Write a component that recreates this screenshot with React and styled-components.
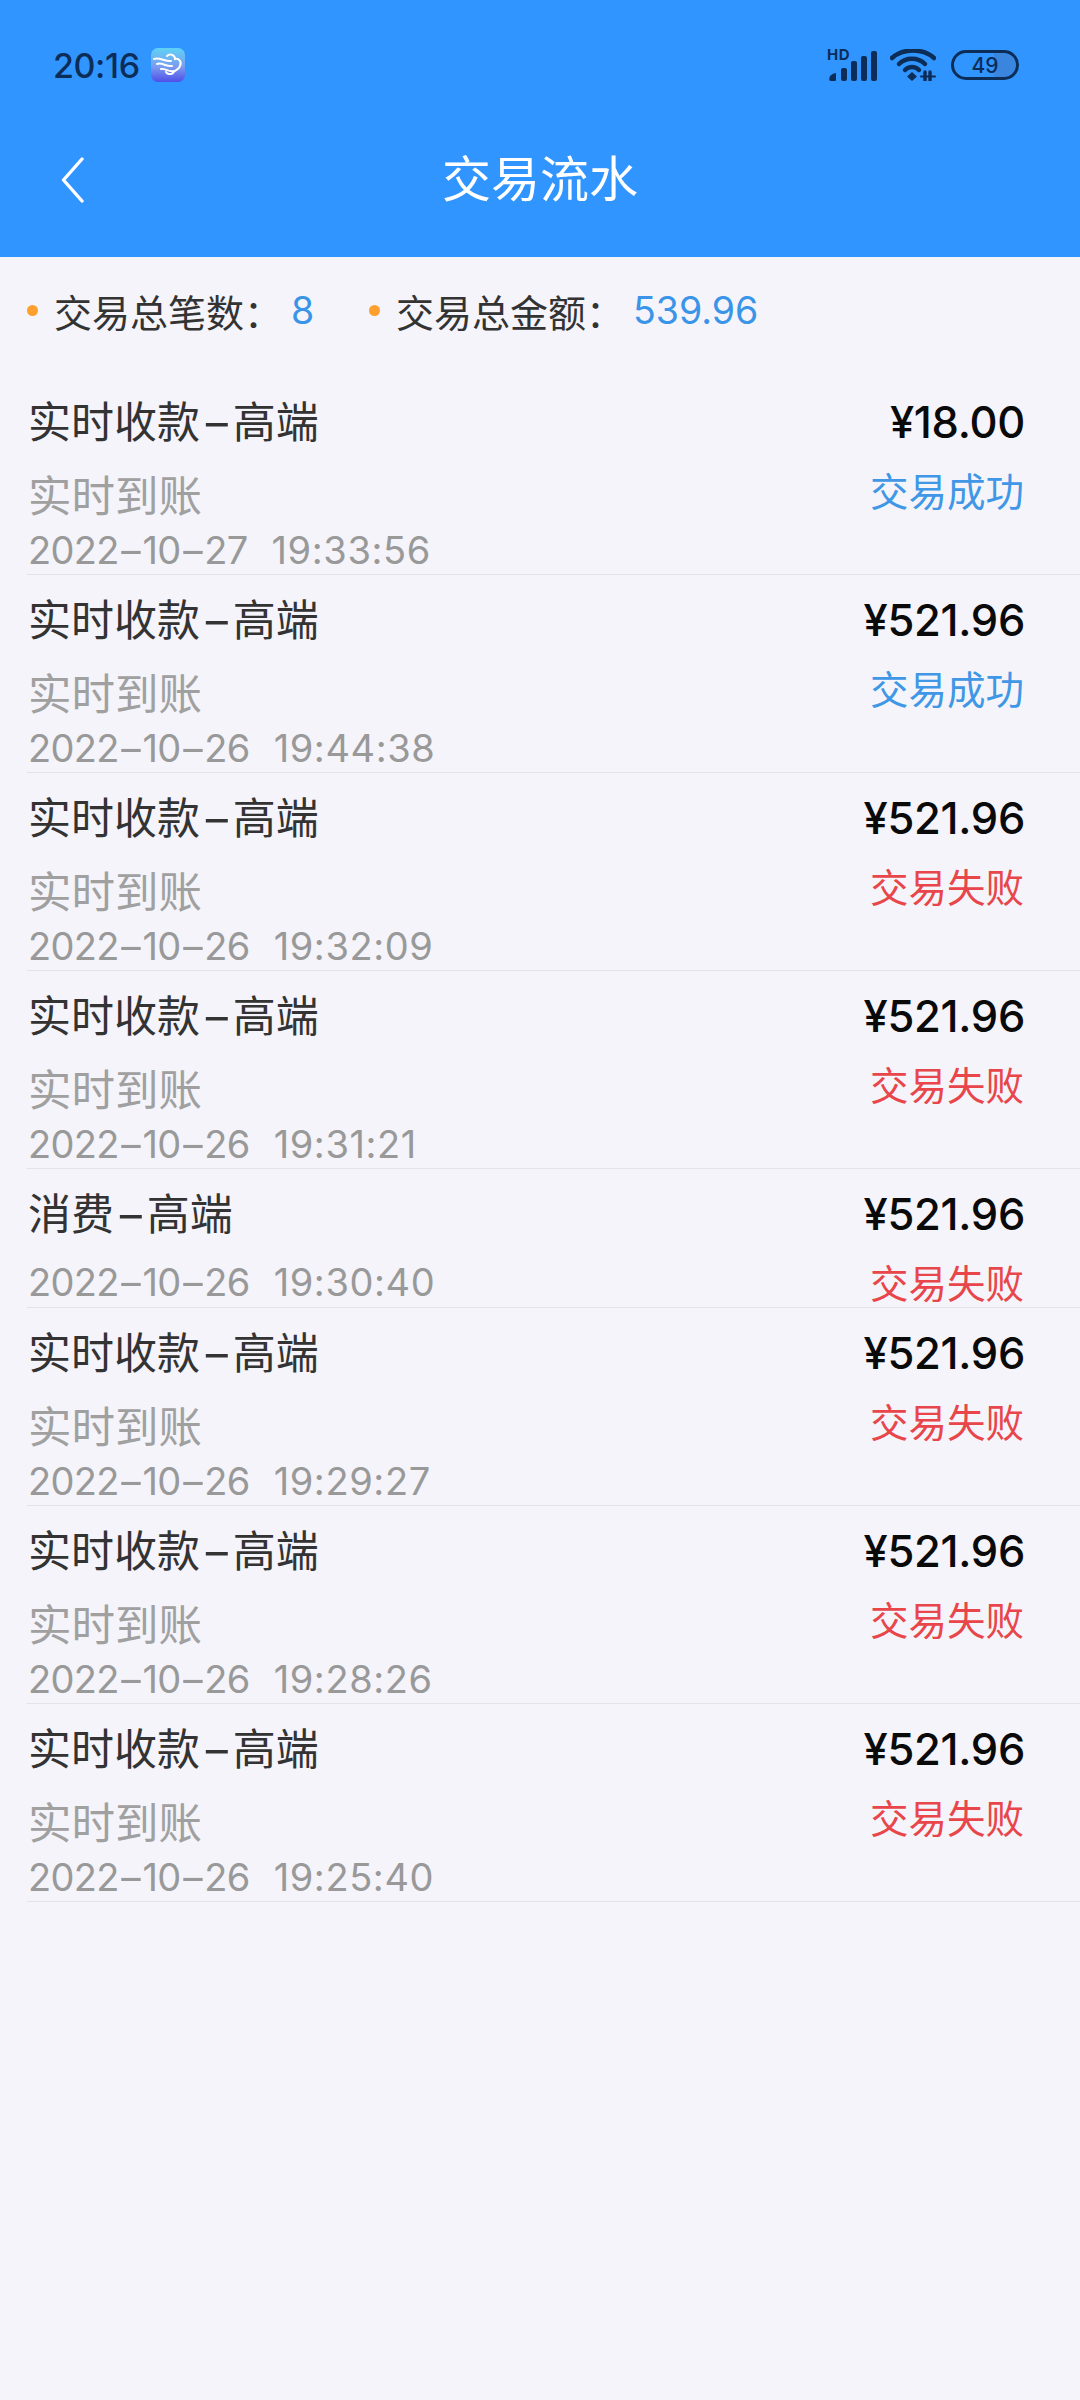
import React from 'react';
import styled, {createGlobalStyle} from 'styled-components';

const GlobalStyle = createGlobalStyle`
  html, body {
    margin: 0;
    padding: 0;
    background-color: #f4f4fa;
  }
  * {
    box-sizing: border-box;
  }
`;

const FONT = `Inter, "Noto Sans CJK SC", sans-serif`;

const Page = styled.div`
  width: 1080px;
  min-height: 2400px;
  background-color: #f4f4fa;
  font-family: ${FONT};
`;

const Header = styled.header`
  height: 257px;
  background-color: #3195ff;
  display: flex;
  flex-direction: column;
`;

const StatusBar = styled.div`
  height: 130px;
  padding: 0 61px 0 53px;
  display: flex;
  align-items: center;
  justify-content: space-between;
`;

const StatusLeft = styled.div`
  display: flex;
  align-items: center;
  gap: 11px;
`;

const Clock = styled.span`
  font-size: 34px;
  font-weight: 500;
  letter-spacing: -0.4px;
  color: #0c2d57;
`;

const StatusRight = styled.div`
  display: flex;
  align-items: center;
  gap: 13px;
`;

const SignalWrap = styled.div`
  position: relative;
  width: 50px;
  height: 32px;
`;

const HdLabel = styled.span`
  position: absolute;
  left: 0;
  top: -3px;
  font-size: 15px;
  line-height: 18px;
  font-weight: 700;
  letter-spacing: 0.6px;
  color: #0c2d57;
`;

const Battery = styled.div`
  width: 68px;
  height: 30px;
  margin-left: 2px;
  border: 3.5px solid #0c2d57;
  border-radius: 15px;
  overflow: hidden;
  display: flex;
  align-items: center;
  justify-content: center;
  font-size: 21px;
  font-weight: 500;
  color: #0c2d57;
  background: linear-gradient(90deg, transparent 65%, #3a85de 65%);
`;

const NavBar = styled.nav`
  height: 100px;
  padding: 0 0 0 61px;
  display: flex;
  align-items: center;
  position: relative;
`;

const NavTitle = styled.h1`
  margin: 0;
  position: absolute;
  left: 0;
  right: 0;
  text-align: center;
  font-size: 49px;
  font-weight: 400;
  line-height: 100px;
  color: #ffffff;
`;

const Summary = styled.div`
  height: 120px;
  padding: 0 0 13px 27px;
  display: flex;
  align-items: center;
`;

const SummaryItem = styled.div`
  display: flex;
  align-items: center;
  width: ${props => props.$width}px;
`;

const Dot = styled.i`
  width: 11px;
  height: 11px;
  border-radius: 50%;
  background-color: #ff9f2e;
  margin-right: 16px;
`;

const SummaryLabel = styled.span`
  font-size: 38px;
  color: #333333;
`;

const SummaryValue = styled.span`
  font-size: 37.5px;
  color: #3a94e8;
  margin-left: 9px;
`;

const Row = styled.div`
  margin-left: 27px;
  padding: 0 55px 0 1px;
  display: flex;
  justify-content: space-between;
  border-bottom: 1px solid #e3e3ea;
`;

const Column = styled.div`
  display: flex;
  flex-direction: column;
  align-items: ${props => (props.$right ? 'flex-end' : 'flex-start')};
`;

const Title = styled.div`
  height: 88px;
  line-height: 90px;
  font-size: 43px;
  color: #333333;
  white-space: nowrap;
`;

const Channel = styled.div`
  height: 60px;
  line-height: 62px;
  font-size: 43.5px;
  color: #a0a0a0;
`;

const Time = styled.div`
  height: 49px;
  line-height: 51px;
  font-size: 38px;
  letter-spacing: -0.7px;
  color: #999999;
  white-space: pre;
`;

const TimeOfDay = styled.span`
  margin-left: 4px;
  letter-spacing: 0.6px;
`;

const Dash = styled.span`
  display: inline-block;
  margin: 0 ${props => props.$gap}px;
  transform: scaleX(1.6);
`;

const Amount = styled.div`
  height: 88px;
  line-height: 90px;
  font-size: 43.5px;
  font-weight: 500;
  letter-spacing: -0.3px;
  color: #0a0a0a;
`;

const Status = styled.div`
  height: 50px;
  line-height: 54px;
  font-size: 38.5px;
  margin-right: 1px;
  color: ${props => (props.$ok ? '#3f97e6' : '#e8464a')};
  white-space: nowrap;
`;

const BackIcon = () => (
  <svg width="24" height="46" viewBox="0 0 24 46" fill="none">
    <path d="M21 2 L2.5 23 L21 44" stroke="#fff" strokeWidth="3.4" strokeLinecap="round" strokeLinejoin="round" />
  </svg>
);

const AppIcon = () => (
  <svg width="34" height="34" viewBox="0 0 34 34">
    <defs>
      <linearGradient id="appBg" x1="0" y1="0" x2="0" y2="1">
        <stop offset="0" stopColor="#5fd2f5" />
        <stop offset="0.55" stopColor="#7b9cf0" />
        <stop offset="1" stopColor="#4f4fe8" />
      </linearGradient>
    </defs>
    <rect width="34" height="34" rx="7" fill="url(#appBg)" />
    <path d="M3 11 C9 9 14 14 20 13 M6 16 C11 14 15 19 21 18 M10 21 C14 20 17 24 23 23" stroke="#fff" strokeWidth="2" fill="none" strokeLinecap="round" />
    <path d="M16 8 C19 5 24 7 24 11 C28 10 31 14 29 18 C28 22 23 22 22 25 C20 27 16 26 15 24" stroke="#fff" strokeWidth="2" fill="none" strokeLinecap="round" />
  </svg>
);

const SignalIcon = () => (
  <SignalWrap>
    <HdLabel>HD</HdLabel>
    <svg width="50" height="32" viewBox="0 0 50 32" fill="#0c2d57">
      <path d="M3 27 q3 -3 6 -3 v7 q0 1 -1 1 h-4 q-3 0 -1 -5 z" />
      <rect x="14" y="19" width="6" height="13" rx="2" />
      <rect x="24" y="12" width="6" height="20" rx="2" />
      <rect x="34" y="7" width="6" height="25" rx="2" />
      <rect x="44" y="2" width="6" height="30" rx="2" />
    </svg>
  </SignalWrap>
);

const WifiIcon = () => (
  <svg width="46" height="32" viewBox="0 0 46 32" fill="none" stroke="#0c2d57" strokeLinecap="round">
    <path d="M2 9 C13 -1 33 -1 44 9" strokeWidth="4.5" />
    <path d="M9 15 C16 8 28 8 35 15" strokeWidth="4.5" />
    <path d="M15 21 C19 17 25 17 29 21" strokeWidth="4.5" />
    <path d="M22 23 L27 27.5 L22 32 L17 27.5 Z" fill="#0c2d57" stroke="none" />
    <path d="M35 23 V32 M40 23 V32" strokeWidth="3.4" />
    <path d="M31 27.5 H45" strokeWidth="2" />
  </svg>
);

// hyphens in the reference are much wider than the font's, stretch them
const withDashes = (text, gap) =>
  text.split('-').flatMap((part, i) => (i === 0 ? [part] : [<Dash key={i} $gap={gap}>-</Dash>, part]));

const records = [
  {title: '实时收款-高端', channel: '实时到账', date: '2022-10-27', time: '19:33:56', amount: '¥18.00', ok: true},
  {title: '实时收款-高端', channel: '实时到账', date: '2022-10-26', time: '19:44:38', amount: '¥521.96', ok: true},
  {title: '实时收款-高端', channel: '实时到账', date: '2022-10-26', time: '19:32:09', amount: '¥521.96'},
  {title: '实时收款-高端', channel: '实时到账', date: '2022-10-26', time: '19:31:21', amount: '¥521.96'},
  {title: '消费-高端', date: '2022-10-26', time: '19:30:40', amount: '¥521.96'},
  {title: '实时收款-高端', channel: '实时到账', date: '2022-10-26', time: '19:29:27', amount: '¥521.96'},
  {title: '实时收款-高端', channel: '实时到账', date: '2022-10-26', time: '19:28:26', amount: '¥521.96'},
  {title: '实时收款-高端', channel: '实时到账', date: '2022-10-26', time: '19:25:40', amount: '¥521.96'},
];

function App() {
  return (
    <Page>
      <GlobalStyle />
      <Header>
        <StatusBar>
          <StatusLeft>
            <Clock>20:16</Clock>
            <AppIcon />
          </StatusLeft>
          <StatusRight>
            <SignalIcon />
            <WifiIcon />
            <Battery>49</Battery>
          </StatusRight>
        </StatusBar>
        <NavBar>
          <BackIcon />
          <NavTitle>交易流水</NavTitle>
        </NavBar>
      </Header>
      <Summary>
        <SummaryItem $width={342}>
          <Dot />
          <SummaryLabel>交易总笔数：</SummaryLabel>
          <SummaryValue>8</SummaryValue>
        </SummaryItem>
        <SummaryItem $width={400}>
          <Dot />
          <SummaryLabel>交易总金额：</SummaryLabel>
          <SummaryValue>539.96</SummaryValue>
        </SummaryItem>
      </Summary>
      {records.map((item, id) => (
        <Row key={id}>
          <Column>
            <Title>{withDashes(item.title, 6.5)}</Title>
            {item.channel && <Channel>{item.channel}</Channel>}
            <Time>
              {withDashes(item.date, 3.5)}{'  '}
              <TimeOfDay>{item.time}</TimeOfDay>
            </Time>
          </Column>
          <Column $right>
            <Amount>{item.amount}</Amount>
            <Status $ok={item.ok}>{item.ok ? '交易成功' : '交易失败'}</Status>
          </Column>
        </Row>
      ))}
    </Page>
  );
}

export default App;
